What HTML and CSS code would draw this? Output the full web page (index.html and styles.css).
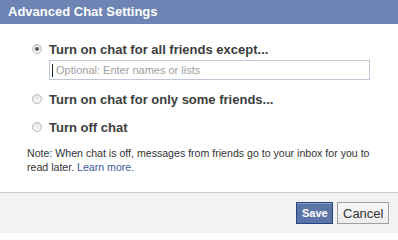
FILE: index.html
```html
<!DOCTYPE html>
<html>
<head>
<meta charset="utf-8">
<link rel="stylesheet" href="styles.css">
</head>
<body>
<div class="dialog">
  <div class="header">Advanced Chat Settings</div>
  <div class="body">
    <div class="option">
      <span class="radio checked"></span>
      <span class="label">Turn on chat for all friends except...</span>
    </div>
    <div class="field"><span class="caret"></span><span class="placeholder">Optional: Enter names or lists</span></div>
    <div class="option option-2">
      <span class="radio"></span>
      <span class="label">Turn on chat for only some friends...</span>
    </div>
    <div class="option option-3">
      <span class="radio"></span>
      <span class="label">Turn off chat</span>
    </div>
    <p class="note">Note: When chat is off, messages from friends go to your inbox for you to read later. <a class="link" href="#">Learn more.</a></p>
  </div>
  <div class="footer">
    <button class="btn btn-primary">Save</button>
    <button class="btn btn-default">Cancel</button>
  </div>
</div>
</body>
</html>
```
FILE: styles.css
```css
html, body {
  margin: 0;
  padding: 0;
  background: #fff;
}
.dialog {
  width: 398px;
  height: 233px;
  display: flex;
  flex-direction: column;
  font-family: "Liberation Sans", Arial, sans-serif;
  color: #333;
}
.header {
  height: 24px;
  line-height: 23px;
  padding-left: 8px;
  background: #6d84b4;
  color: #fff;
  font-weight: bold;
  font-size: 13px;
  flex: none;
}
.body {
  flex: 1;
  padding: 17px 0 0 27px;
}
.option {
  display: flex;
  align-items: center;
  height: 16px;
  padding-left: 5px;
}
.option-2 { margin-top: 11px; }
.option-3 { margin-top: 12px; }
.radio {
  width: 8px;
  height: 8px;
  border-radius: 50%;
  border: 1px solid #b7b7b7;
  background: linear-gradient(#e4e4e4, #fafafa);
  display: flex;
  align-items: center;
  justify-content: center;
  margin-right: 7px;
  flex: none;
}
.radio.checked::after {
  content: "";
  width: 4px;
  height: 4px;
  border-radius: 50%;
  background: #5a5a5a;
}
.label {
  font-size: 13px;
  font-weight: bold;
  color: #3d3d3d;
}
.field {
  box-sizing: border-box;
  width: 321px;
  height: 20px;
  margin: 3px 0 0 22px;
  border: 1px solid #bdc7d8;
  display: flex;
  align-items: center;
  padding-left: 2px;
}
.caret {
  width: 1px;
  height: 13px;
  background: #222;
  margin-right: 3px;
}
.placeholder {
  font-size: 11px;
  color: #a0a0a0;
}
.note {
  margin: 11px 0 0;
  font-size: 10.6px;
  line-height: 14px;
  width: 352px;
}
.link {
  color: #3b5998;
  text-decoration: none;
}
.footer {
  flex: none;
  height: 40px;
  border-top: 1px solid #cccccc;
  background: #f2f2f2;
  display: flex;
  justify-content: flex-end;
  align-items: center;
  gap: 4px;
  padding-right: 9px;
}
.btn {
  height: 22px;
  box-sizing: border-box;
  font-family: "Liberation Sans", Arial, sans-serif;
  padding: 0 5px;
  margin: 0;
  cursor: pointer;
}
.btn-primary {
  width: 37px;
  background: #5b74a8;
  border: 1px solid #29447e;
  color: #fff;
  font-weight: bold;
  font-size: 11px;
  box-shadow: inset 0 1px 0 #8a9cc2;
}
.btn-default {
  width: 52px;
  background: linear-gradient(#f7f7f7, #ececec);
  border: 1px solid #a0a0a0;
  color: #333;
  font-size: 13px;
}
```
